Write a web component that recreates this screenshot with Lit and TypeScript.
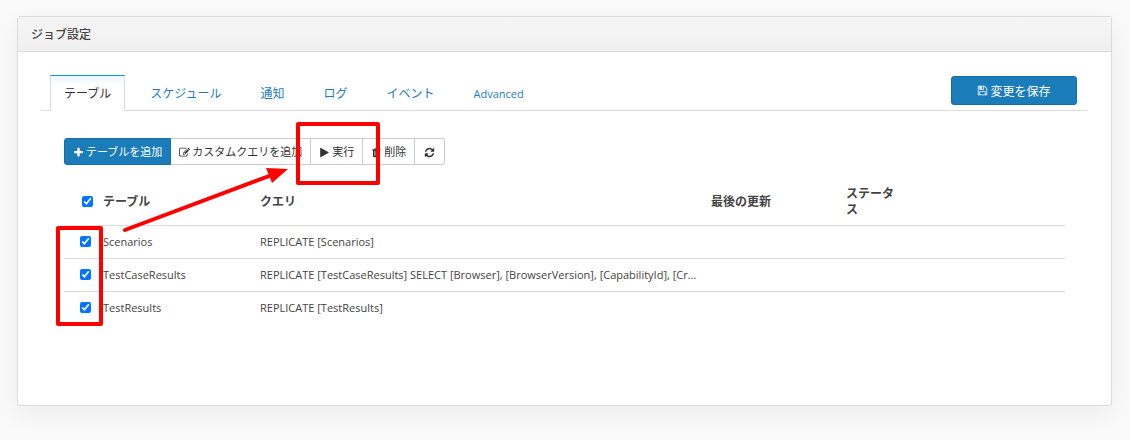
import { LitElement, html, css, svg } from "lit";
import { customElement, property, state } from "lit/decorators.js";

const ICONS: Record<string, string> = {
  plus: "M1600 736v192q0 40-28 68t-68 28h-416v416q0 40-28 68t-68 28h-192q-40 0-68-28t-28-68v-416h-416q-40 0-68-28t-28-68v-192q0-40 28-68t68-28h416v-416q0-40 28-68t68-28h192q40 0 68 28t28 68v416h416q40 0 68 28t28 68z",
  play: "M1576 927l-1328 738q-23 13-39.5 3t-16.5-36v-1472q0-26 16.5-36t39.5 3l1328 738q23 13 23 31t-23 31z",
  refresh:
    "M1639 1056q0 5-1 7-64 268-268 434.5t-478 166.5q-146 0-282.5-55t-243.5-157l-129 129q-19 19-45 19t-45-19-19-45v-448q0-26 19-45t45-19h448q26 0 45 19t19 45-19 45l-137 137q71 66 161 102t187 36q134 0 250-65t186-179q11-17 53-117 8-23 30-23h192q13 0 22.5 9.5t9.5 22.5zm25-800v448q0 26-19 45t-45 19h-448q-26 0-45-19t-19-45 19-45l138-138q-148-137-349-137-134 0-250 65t-186 179q-11 17-53 117-8 23-30 23h-199q-13 0-22.5-9.5t-9.5-22.5v-7q65-268 270-434.5t480-166.5q146 0 284 55.5t245 156.5l130-129q19-19 45-19t45 19 19 45z",
  save: "M512 1536h768v-384h-768v384zm896 0h128v-896q0-14-10-38.5t-20-34.5l-281-281q-10-10-34-20t-39-10v416q0 40-28 68t-68 28h-576q-40 0-68-28t-28-68v-416h-128v1280h128v-416q0-40 28-68t68-28h832q40 0 68 28t28 68v416zm-384-928v-320q0-13-9.5-22.5t-22.5-9.5h-192q-13 0-22.5 9.5t-9.5 22.5v320q0 13 9.5 22.5t22.5 9.5h192q13 0 22.5-9.5t9.5-22.5zm640 32v928q0 40-28 68t-68 28h-1344q-40 0-68-28t-28-68v-1344q0-40 28-68t68-28h928q40 0 88 20t76 48l280 280q28 28 48 76t20 88z",
  edit: "M888 1184l116-116-152-152-116 116v56h96v96h56zm440-720q-16-16-33 1l-350 350q-17 17-1 33t33-1l350-350q17-17 1-33zm80 594v190q0 119-84.5 203.5t-203.5 84.5h-832q-119 0-203.5-84.5t-84.5-203.5v-832q0-119 84.5-203.5t203.5-84.5h832q63 0 117 25 15 7 18 23 3 17-9 29l-49 49q-14 14-32 8-23-6-45-6h-832q-66 0-113 47t-47 113v832q0 66 47 113t113 47h832q66 0 113-47t47-113v-126q0-13 9-22l64-64q15-15 35-7t20 29zm-96-738l288 288-672 672h-288v-288zm444 132l-92 92-288-288 92-92q28-28 68-28t68 28l152 152q28 28 28 68t-28 68z",
  trash:
    "M704 1376v-704q0-14-9-23t-23-9h-64q-14 0-23 9t-9 23v704q0 14 9 23t23 9h64q14 0 23-9t9-23zm256 0v-704q0-14-9-23t-23-9h-64q-14 0-23 9t-9 23v704q0 14 9 23t23 9h64q14 0 23-9t9-23zm256 0v-704q0-14-9-23t-23-9h-64q-14 0-23 9t-9 23v704q0 14 9 23t23 9h64q14 0 23-9t9-23zm-544-992h448l-48-117q-7-9-17-11h-317q-10 2-17 11zm928 32v64q0 14-9 23t-23 9h-96v948q0 83-47 143.5t-113 60.5h-832q-66 0-113-58.5t-47-141.5v-952h-96q-14 0-23-9t-9-23v-64q0-14 9-23t23-9h309l70-167q15-37 54-63t79-26h320q40 0 79 26t54 63l70 167h309q14 0 23 9t9 23z",
};

@customElement("fa-icon")
export class FaIcon extends LitElement {
  static styles = css`
    :host {
      display: inline-flex;
      flex: none;
    }
    .glyph {
      width: 11px;
      height: 11px;
      fill: currentColor;
    }
  `;
  @property() name = "plus";
  render() {
    return html`<svg class="glyph" viewBox="0 0 1792 1792" aria-hidden="true">
      ${svg`<path d=${ICONS[this.name]}></path>`}
    </svg>`;
  }
}

interface Row {
  name: string;
  query: string;
}

@customElement("app-root")
export class AppRoot extends LitElement {
  static styles = css`
    :host {
      display: block;
      position: relative;
      box-sizing: border-box;
      min-height: 100vh;
      padding: 16px 18px 35px 17px;
      overflow: hidden;
      background: #fafafa;
      color: #444;
      font: 12px/16px "Open Sans", "Noto Sans CJK JP", sans-serif;
    }
    * {
      box-sizing: border-box;
    }
    .panel {
      background: #fff;
      border: 1px solid #dadbdc;
      border-radius: 3px;
      box-shadow: 0 8px 30px rgba(0, 0, 0, 0.06);
    }
    .title {
      margin: 0;
      padding: 10px 13px 8px;
      border-bottom: 1px solid #dadbdc;
      border-radius: 2px 2px 0 0;
      background: linear-gradient(#f5f5f5, #f0f0f0);
      font-size: 12px;
      line-height: 16px;
      font-weight: 500;
    }
    .body {
      min-height: 353px;
      padding: 23px 23px 40px;
    }
    .tabbar {
      display: flex;
      align-items: flex-end;
      justify-content: space-between;
      padding: 0 11px 0 9px;
      border-bottom: 1px solid #dadbdc;
    }
    .tabs {
      display: flex;
      gap: 11px;
      margin-bottom: -1px;
    }
    .tab {
      height: 36px;
      padding: 9px 13px;
      border: 1px solid transparent;
      border-bottom: 0;
      color: #1b7dba;
      line-height: 17px;
      text-decoration: none;
    }
    .tab.latin,
    .cell {
      font-size: 11px;
    }
    .tab.active {
      border-color: #dadbdc;
      border-top-color: #1090ea;
      background: linear-gradient(#ecf6fe, #fff 10px);
      color: #333;
    }
    button {
      display: inline-flex;
      align-items: center;
      justify-content: center;
      gap: 2px;
      margin: 0;
      font-family: inherit;
      cursor: pointer;
    }
    .save {
      width: 126px;
      height: 29px;
      margin-bottom: 5px;
      border: 1px solid #156ea4;
      border-radius: 3px;
      background: #1a7cb9;
      color: #fff;
      font-size: 12px;
      padding: 0;
    }
    .toolbar {
      display: flex;
      padding: 27px 23px 14px;
    }
    .tool {
      height: 27px;
      padding: 1px 8px 0;
      border: 1px solid #ccc;
      border-left-width: 0;
      background: #fff;
      color: #333;
      font-size: 11px;
      line-height: 16px;
      white-space: nowrap;
    }
    .tool.primary {
      border: 1px solid #156ea4;
      border-radius: 3px 0 0 3px;
      background: #1a7cb9;
      color: #fff;
    }
    .tool:last-child {
      padding: 1px 9px 0;
      border-radius: 0 3px 3px 0;
    }
    .grid {
      padding: 0 23px;
    }
    table {
      width: 100%;
      table-layout: fixed;
      border-collapse: collapse;
    }
    .c-check {
      width: 34px;
    }
    .c-name {
      width: 157px;
    }
    .c-updated {
      width: 135px;
    }
    .c-status {
      width: 58px;
    }
    .c-rest {
      width: 166px;
    }
    th {
      height: 46px;
      padding: 0 5px;
      text-align: left;
      font-weight: 600;
    }
    .cell {
      height: 33px;
      padding: 0 5px;
      border-top: 1px solid #dadbdc;
      overflow: hidden;
      white-space: nowrap;
      text-overflow: ellipsis;
    }
    .check {
      padding: 0 0 0 16px;
    }
    th.check {
      padding-left: 18px;
    }
    .check input {
      display: block;
      width: 11px;
      height: 11px;
      margin: 0;
    }
    .marks {
      position: absolute;
      left: 0;
      top: 0;
      width: 400px;
      height: 340px;
      pointer-events: none;
      fill: none;
      stroke: #f00;
      stroke-width: 4;
    }
    .head {
      fill: #f00;
      stroke: none;
    }
  `;

  @state() rows: Row[] = [
    { name: "Scenarios", query: "REPLICATE [Scenarios]" },
    {
      name: "TestCaseResults",
      query: "REPLICATE [TestCaseResults] SELECT [Browser], [BrowserVersion], [CapabilityId], [Cr…",
    },
    { name: "TestResults", query: "REPLICATE [TestResults]" },
  ];

  render() {
    return html`
      <section class="panel">
        <h1 class="title">ジョブ設定</h1>
        <div class="body">
          <div class="tabbar">
            <nav class="tabs">
              <a class="tab active" href="#tables">テーブル</a>
              <a class="tab" href="#schedule">スケジュール</a>
              <a class="tab" href="#notify">通知</a>
              <a class="tab" href="#log">ログ</a>
              <a class="tab" href="#events">イベント</a>
              <a class="tab latin" href="#advanced">Advanced</a>
            </nav>
            <button class="save"><fa-icon name="save"></fa-icon>変更を保存</button>
          </div>
          <div class="toolbar">
            <button class="tool primary"><fa-icon name="plus"></fa-icon>テーブルを追加</button>
            <button class="tool"><fa-icon name="edit"></fa-icon>カスタムクエリを追加</button>
            <button class="tool"><fa-icon name="play"></fa-icon>実行</button>
            <button class="tool"><fa-icon name="trash"></fa-icon>削除</button>
            <button class="tool" aria-label="更新"><fa-icon name="refresh"></fa-icon></button>
          </div>
          <div class="grid">
            <table>
              <colgroup>
                <col class="c-check" />
                <col class="c-name" />
                <col />
                <col class="c-updated" />
                <col class="c-status" />
                <col class="c-rest" />
              </colgroup>
              <thead>
                <tr>
                  <th class="check"><input type="checkbox" checked aria-label="すべて選択" /></th>
                  <th>テーブル</th>
                  <th>クエリ</th>
                  <th>最後の更新</th>
                  <th>ステータス</th>
                  <th></th>
                </tr>
              </thead>
              <tbody>
                ${this.rows.map(
                  (r) => html`<tr>
                    <td class="cell check"><input type="checkbox" checked aria-label=${r.name} /></td>
                    <td class="cell">${r.name}</td>
                    <td class="cell">${r.query}</td>
                    <td class="cell"></td>
                    <td class="cell"></td>
                    <td class="cell"></td>
                  </tr>`
                )}
              </tbody>
            </table>
          </div>
        </div>
      </section>
      <svg class="marks" viewBox="0 0 400 340" aria-hidden="true">
        <rect x="298" y="124" width="80" height="59" stroke-linejoin="round"></rect>
        <rect x="58" y="228" width="43" height="96" stroke-linejoin="round"></rect>
        <path d="M125 230L272 175" stroke-linecap="round"></path>
        <path class="head" d="M266 168L288 169L272 183Z"></path>
      </svg>
    `;
  }
}
